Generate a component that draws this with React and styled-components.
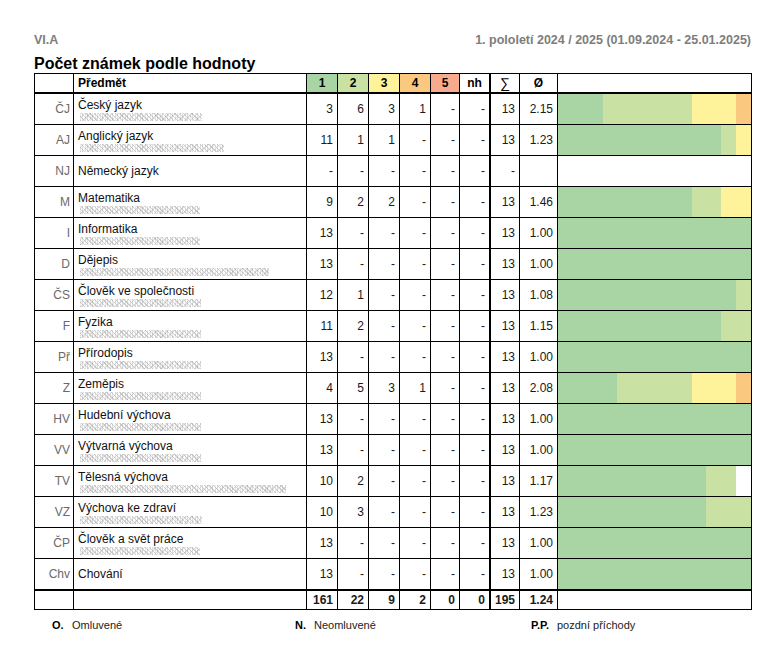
import React from "react";
import styled, { createGlobalStyle } from "styled-components";

const GRADE_COLORS = ["#a9d5a5", "#c9e2a4", "#fef39a", "#fac97f", "#f8aa8c"];
const COLS = "39px 233px 31px 31px 31px 31px 29px 30px 30px 38px 194px";

const rows = [
  { abbr: "ČJ", name: "Český jazyk", noise: 122, g: [3, 6, 3, 1, 0, 0], sum: 13, avg: "2.15" },
  { abbr: "AJ", name: "Anglický jazyk", noise: 144, g: [11, 1, 1, 0, 0, 0], sum: 13, avg: "1.23" },
  { abbr: "NJ", name: "Německý jazyk", noise: 0, g: null, sum: null, avg: "" },
  { abbr: "M", name: "Matematika", noise: 120, g: [9, 2, 2, 0, 0, 0], sum: 13, avg: "1.46" },
  { abbr: "I", name: "Informatika", noise: 120, g: [13, 0, 0, 0, 0, 0], sum: 13, avg: "1.00" },
  { abbr: "D", name: "Dějepis", noise: 189, g: [13, 0, 0, 0, 0, 0], sum: 13, avg: "1.00" },
  { abbr: "ČS", name: "Člověk ve společnosti", noise: 121, g: [12, 1, 0, 0, 0, 0], sum: 13, avg: "1.08" },
  { abbr: "F", name: "Fyzika", noise: 121, g: [11, 2, 0, 0, 0, 0], sum: 13, avg: "1.15" },
  { abbr: "Př", name: "Přírodopis", noise: 121, g: [13, 0, 0, 0, 0, 0], sum: 13, avg: "1.00" },
  { abbr: "Z", name: "Zeměpis", noise: 121, g: [4, 5, 3, 1, 0, 0], sum: 13, avg: "2.08" },
  { abbr: "HV", name: "Hudební výchova", noise: 121, g: [13, 0, 0, 0, 0, 0], sum: 13, avg: "1.00" },
  { abbr: "VV", name: "Výtvarná výchova", noise: 121, g: [13, 0, 0, 0, 0, 0], sum: 13, avg: "1.00" },
  { abbr: "TV", name: "Tělesná výchova", noise: 206, g: [10, 2, 0, 0, 0, 0], sum: 13, avg: "1.17" },
  { abbr: "VZ", name: "Výchova ke zdraví", noise: 122, g: [10, 3, 0, 0, 0, 0], sum: 13, avg: "1.23" },
  { abbr: "ČP", name: "Člověk a svět práce", noise: 120, g: [13, 0, 0, 0, 0, 0], sum: 13, avg: "1.00" },
  { abbr: "Chv", name: "Chování", noise: 0, g: [13, 0, 0, 0, 0, 0], sum: 13, avg: "1.00" },
];

const totals = [161, 22, 9, 2, 0, 0];

const Global = createGlobalStyle`
  body {
    margin: 0;
    background: #fff;
    font-family: "Liberation Sans", Arial, sans-serif;
    color: #111;
  }
`;

const Page = styled.div`
  padding: 33px 30px 0 34px;
`;

const TopBar = styled.div`
  display: flex;
  justify-content: space-between;
  font-size: 12.5px;
  font-weight: bold;
  color: #7d7d7d;
  line-height: 15px;
`;

const Title = styled.h1`
  margin: 7px 0 0;
  font-size: 16px;
  line-height: 18px;
  font-weight: bold;
  color: #000;
`;

const Grid = styled.div`
  border-top: 1px solid #000;
  border-left: 1px solid #000;
  width: 717px;
`;

const Row = styled.div`
  display: grid;
  grid-template-columns: ${COLS};
  height: ${(p) => p.$h}px;
  box-sizing: border-box;
  border-bottom: ${(p) => p.$bottom || 1}px solid #000;
`;

const Cell = styled.div`
  display: flex;
  align-items: center;
  justify-content: flex-end;
  padding-right: 4px;
  box-sizing: border-box;
  border-right: 1px solid #000;
  border-left: ${(p) => (p.$thick ? "1px solid #000" : "none")};
  background: ${(p) => p.$bg || "transparent"};
  font-size: 12px;
  font-weight: ${(p) => (p.$bold ? "bold" : "normal")};
  color: #1a1a1a;
  overflow: hidden;
`;

const HeadCell = styled(Cell)`
  justify-content: ${(p) => (p.$left ? "flex-start" : "center")};
  padding: ${(p) => (p.$left ? "0 0 0 4px" : "0")};
  font-weight: ${(p) => (p.$thin ? "normal" : "bold")};
  font-size: ${(p) => (p.$thin ? 14 : 12)}px;
  color: #000;
`;

const Abbr = styled(Cell)`
  color: #6a6a6a;
  padding-right: 3px;
`;

const Subject = styled.div`
  display: flex;
  flex-direction: column;
  justify-content: center;
  padding-left: 4px;
  border-right: 1px solid #000;
  font-size: 12px;
  color: #111;
  overflow: hidden;
`;

const Name = styled.div`
  line-height: 14px;
`;

const Noise = styled.div`
  height: 8px;
  margin-top: 1px;
  margin-left: 2px;
  width: ${(p) => p.$w}px;
  opacity: 0.85;
  background-image:
    repeating-linear-gradient(45deg, rgba(120,120,120,0.35) 0 1px, transparent 1px 3px),
    repeating-linear-gradient(-45deg, rgba(150,150,150,0.35) 0 1px, transparent 1px 4px),
    repeating-linear-gradient(90deg, rgba(170,170,170,0.3) 0 1px, transparent 1px 2px, rgba(110,110,110,0.25) 2px 3px, transparent 3px 5px),
    repeating-linear-gradient(0deg, rgba(255,255,255,0.6) 0 1px, transparent 1px 3px);
`;

const Bar = styled.div`
  display: flex;
  border-right: 1px solid #000;
`;

const Segment = styled.div`
  background: ${(p) => p.$color};
`;

const Footer = styled.div`
  display: grid;
  grid-template-columns: 243px 236px auto;
  padding: 9px 0 0 18px;
  font-size: 11px;
  color: #222;
`;

const Legend = styled.div`
  display: flex;
  align-items: baseline;
`;

const Key = styled.span`
  font-weight: bold;
  min-width: ${(p) => p.$w}px;
  color: #000;
`;

const show = (v) => (v ? v : "-");

export default function App() {
  return (
    <Page>
      <Global />
      <TopBar>
        <span>VI.A</span>
        <span>1. pololetí 2024 / 2025 (01.09.2024 - 25.01.2025)</span>
      </TopBar>
      <Title>Počet známek podle hodnoty</Title>
      <Grid>
        <Row $h={20} $bottom={2}>
          <HeadCell />
          <HeadCell $left>Předmět</HeadCell>
          {GRADE_COLORS.map((c, i) => (
            <HeadCell key={c} $bg={c}>
              {i + 1}
            </HeadCell>
          ))}
          <HeadCell>nh</HeadCell>
          <HeadCell $thick $thin>∑</HeadCell>
          <HeadCell>Ø</HeadCell>
          <HeadCell />
        </Row>
        {rows.map((r, idx) => (
          <Row key={r.abbr} $h={idx === rows.length - 1 ? 32 : 31} $bottom={idx === rows.length - 1 ? 2 : 1}>
            <Abbr>{r.abbr}</Abbr>
            <Subject>
              <Name>{r.name}</Name>
              {r.noise > 0 && <Noise $w={r.noise} />}
            </Subject>
            {(r.g || [0, 0, 0, 0, 0, 0]).map((v, i) => (
              <Cell key={i}>{show(v)}</Cell>
            ))}
            <Cell $thick>{show(r.sum)}</Cell>
            <Cell>{r.avg}</Cell>
            <Bar>
              {r.g &&
                r.g.slice(0, 5).map((v, i) =>
                  v ? <Segment key={i} $color={GRADE_COLORS[i]} style={{ width: `${(v / r.sum) * 100}%` }} /> : null
                )}
            </Bar>
          </Row>
        ))}
        <Row $h={19}>
          <Cell />
          <Cell />
          {totals.map((v, i) => (
            <Cell key={i} $bold>
              {v}
            </Cell>
          ))}
          <Cell $thick $bold>195</Cell>
          <Cell $bold>1.24</Cell>
          <Cell />
        </Row>
      </Grid>
      <Footer>
        <Legend>
          <Key $w={20}>O.</Key>
          <span>Omluvené</span>
        </Legend>
        <Legend>
          <Key $w={19}>N.</Key>
          <span>Neomluvené</span>
        </Legend>
        <Legend>
          <Key $w={26}>P.P.</Key>
          <span>pozdní příchody</span>
        </Legend>
      </Footer>
    </Page>
  );
}
